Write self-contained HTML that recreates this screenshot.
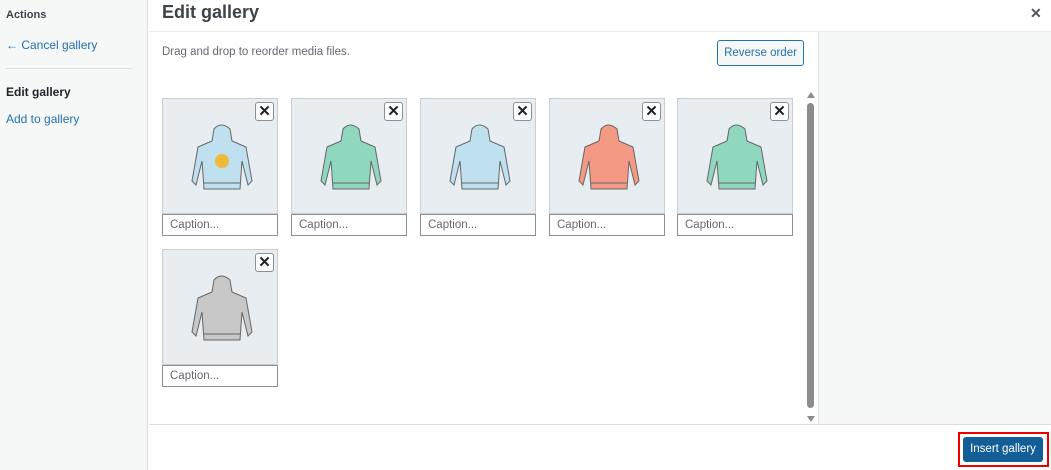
<!DOCTYPE html>
<html><head><style>
*{box-sizing:border-box;margin:0;padding:0}
body{width:1051px;height:470px;position:relative;font-family:"Liberation Sans",sans-serif;background:#fff;overflow:hidden}
.side{position:absolute;left:0;top:0;width:148px;height:470px;background:#f6f7f7;border-right:1px solid #dcdcde}
.side .h{position:absolute;left:6px;top:9px;font-size:11px;font-weight:bold;color:#3c434a}
.side a{position:absolute;left:6px;font-size:12px;color:#2271b1;text-decoration:none}
.side hr{position:absolute;left:6px;top:68px;width:126px;border:0;border-top:1px solid #dcdcde}
.title{position:absolute;left:162px;top:2px;font-size:18px;font-weight:bold;color:#3c434a}
.close{position:absolute;left:1030px;top:5px;font-size:14px;color:#50575e;font-weight:bold}
.hdrline{position:absolute;left:149px;top:31px;width:902px;border-top:1px solid #ececec}
.rside{position:absolute;left:818px;top:32px;width:233px;height:392px;background:#f6f7f7;border-left:1px solid #e0e0e0}
.foot{position:absolute;left:149px;top:424px;width:902px;border-top:1px solid #dcdcde}
.drag{position:absolute;left:162px;top:46px;font-size:11.5px;color:#646970}
.rev{position:absolute;left:717px;top:40px;width:87px;height:26px;border:1px solid #2271b1;border-radius:3px;background:#f6f7f7;color:#2271b1;font-size:11.5px;text-align:center;line-height:24px;white-space:nowrap}
.tile{position:absolute;width:116px;height:138px}
.img{position:absolute;left:0;top:0;width:116px;height:116px;background:#e8edf1;border:1px solid #c9ced3}
.cap{position:absolute;left:0;top:116px;width:116px;height:22px;border:1px solid #8c8f94;background:#fff;font-size:11.5px;color:#646970;padding:4px 0 0 7px}
.x{position:absolute;right:3px;top:3px;width:19px;height:19px;background:#fff;border:1px solid #8c8f94;border-radius:3px;font-size:15px;font-weight:bold;line-height:17px;text-align:center;color:#1d2327}
.img svg{position:absolute;left:25px;top:22px}
.sb{position:absolute;left:807px;top:103px;width:7px;height:305px;background:#8c8c8c;border-radius:4px}
.ins{position:absolute;left:963px;top:437px;width:80px;height:25px;background:#135e96;color:#fff;font-size:11.5px;text-align:center;line-height:25px;border-radius:3px;white-space:nowrap}
.red{position:absolute;left:958px;top:432px;width:91px;height:35px;border:2px solid #e00}
</style></head><body>
<div class="side">
<div class="h">Actions</div>
<a style="top:38px">← Cancel gallery</a>
<hr>
<div style="position:absolute;left:6px;top:85px;font-size:12px;font-weight:bold;color:#1d2327">Edit gallery</div>
<a style="top:112px">Add to gallery</a>
</div>
<div class="title">Edit gallery</div>
<div class="close">✕</div>
<div class="hdrline"></div>
<div class="rside"></div>
<div class="foot"></div>
<div class="drag">Drag and drop to reorder media files.</div>
<div class="rev">Reverse order</div>

<svg width="0" height="0" style="position:absolute"><defs>
<g id="h"><path d="M26 8 Q33 0 42 8 L44 20 L58 26 L64 60 L60 64 L54 40 L52 68 L16 68 L14 40 L8 64 L4 60 L10 26 L24 20 Z" stroke="#666" stroke-width="1"/><path d="M16 62 L52 62" stroke="#666"/></g>
</defs></svg>

<div class="tile" style="left:162px;top:98px"><div class="img"><svg width="68" height="70"><use href="#h" fill="#bfe0ee"/><circle cx="34" cy="40" r="7" fill="#f0b93a"/></svg><div class="x">✕</div></div><div class="cap">Caption...</div></div>
<div class="tile" style="left:291px;top:98px"><div class="img"><svg width="68" height="70"><use href="#h" fill="#8fd8bf"/></svg><div class="x">✕</div></div><div class="cap">Caption...</div></div>
<div class="tile" style="left:420px;top:98px"><div class="img"><svg width="68" height="70"><use href="#h" fill="#bfe0ee"/></svg><div class="x">✕</div></div><div class="cap">Caption...</div></div>
<div class="tile" style="left:549px;top:98px"><div class="img"><svg width="68" height="70"><use href="#h" fill="#f49a84"/></svg><div class="x">✕</div></div><div class="cap">Caption...</div></div>
<div class="tile" style="left:677px;top:98px"><div class="img"><svg width="68" height="70"><use href="#h" fill="#8fd8bf"/></svg><div class="x">✕</div></div><div class="cap">Caption...</div></div>
<div class="tile" style="left:162px;top:249px"><div class="img"><svg width="68" height="70"><use href="#h" fill="#c8c8c8"/></svg><div class="x">✕</div></div><div class="cap">Caption...</div></div>

<div style="position:absolute;left:807px;top:92px;width:0;height:0;border:4px solid transparent;border-bottom:6px solid #8c8c8c;border-top:0"></div>
<div class="sb"></div>
<div style="position:absolute;left:807px;top:416px;width:0;height:0;border:4px solid transparent;border-top:6px solid #8c8c8c;border-bottom:0"></div>
<div class="red"></div>
<div class="ins">Insert gallery</div>
</body></html>
